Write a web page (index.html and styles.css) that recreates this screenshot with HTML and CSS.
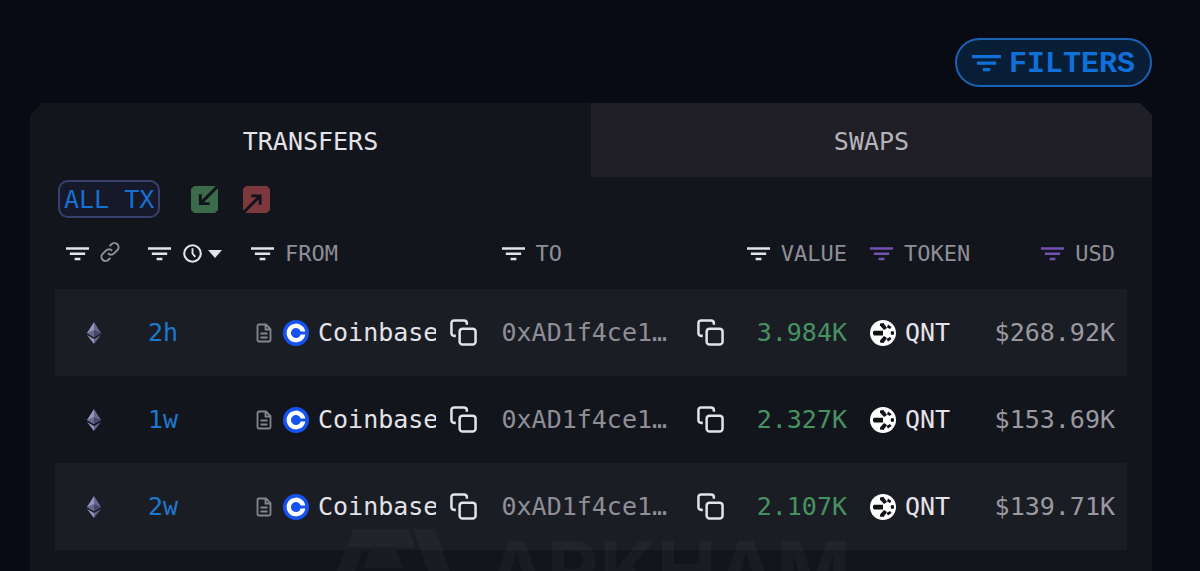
FILE: index.html
```html
<!DOCTYPE html>
<html lang="en">
<head>
<meta charset="utf-8">
<meta name="viewport" content="width=device-width, initial-scale=1">
<title>Transfers</title>
<link rel="stylesheet" href="styles.css">
</head>
<body>
<svg class="sprite" aria-hidden="true">
  <symbol id="filter" viewBox="0 0 24 14"><path d="M0 0h24v2.6H0zM4 5.4h16V8H4zM9 10.8h6v2.6H9z" fill="currentColor"/></symbol>
  <symbol id="eth" viewBox="0 0 14 22"><path d="M7 0 0 11l7 4z" fill="#9597bd"/><path d="m7 0 7 11-7 4z" fill="#666890"/><path d="m7 8-7 3 7 4z" fill="#66688f"/><path d="m7 8 7 3-7 4z" fill="#464666"/><path d="m0 13 7 9v-5z" fill="#9395ba"/><path d="m14 13-7 9v-5z" fill="#606287"/></symbol>
  <symbol id="doc" viewBox="0 0 16 20"><path d="M3 1.500h7l4.500 4.500V17c0 1-.5 1.500-1.500 1.500H3c-1 0-1.500-.5-1.500-1.500V3c0-1 .5-1.500 1.500-1.500zM9.500 1.500v5h5M4.500 10.500h7M4.500 14.500h7" fill="none" stroke="currentColor" stroke-width="1.800"/></symbol>
  <symbol id="coinbase" viewBox="0 0 26 26"><circle cx="13" cy="13" r="13" fill="#1652f0"/><path d="M17.700 11.600a5 5 0 1 0 0 2.800h4.600a9.400 9.400 0 1 1 0-2.800z" fill="#fff"/></symbol>
  <symbol id="copy" viewBox="0 0 28 28"><rect x="10" y="10" width="16.500" height="16.500" rx="3" fill="none" stroke="currentColor" stroke-width="2.600"/><path d="M6 17.500H4.500c-2 0-3-1-3-3v-10c0-2 1-3 3-3h10c2 0 3 1 3 3V6" fill="none" stroke="currentColor" stroke-width="2.600"/></symbol>
  <symbol id="qnt" viewBox="0 0 26 26"><circle cx="13" cy="13" r="13" fill="#fff"/><g fill="#101116"><path d="M4 10.800h9v4.600H4L3 14v-2z"/><path d="m10 3.500 3.500-.5 3.500 5-3 2-4-4.500z"/><path d="m14 16 3 2-3.500 5-3.500-.5v-2z"/><path d="m18 4.500 3.500 2.500-1.500 2-3-1.500z"/><path d="m21.500 11 2.500.5v3l-2.500.5-1-2z"/><path d="m20 17 1.500 2-3.500 2.500-1.500-2.500z"/></g></symbol>
</svg>

<header class="topbar">
  <button class="filters" type="button"><svg class="filters-icon" aria-hidden="true"><use href="#filter"/></svg>FILTERS</button>
</header>

<main class="card">
  <div class="tabs" role="tablist">
    <button class="tab active" type="button" role="tab" aria-selected="true">TRANSFERS</button>
    <button class="tab" type="button" role="tab" aria-selected="false">SWAPS</button>
  </div>

  <div class="toolbar">
    <button class="all-tx" type="button">ALL TX</button>
    <button class="direction" type="button" aria-label="Incoming">
      <svg viewBox="0 0 26 26"><path d="M3 0h20l3 3v20l-3 3H3l-3-3V3z" fill="#3b6b4b"/><path d="M25 1 10 16M9 8v9h9" fill="none" stroke="#11131b" stroke-width="2.800"/></svg>
    </button>
    <button class="direction" type="button" aria-label="Outgoing">
      <svg viewBox="0 0 26 26"><path d="M3 0h20l3 3v20l-3 3H3l-3-3V3z" fill="#7d383e"/><path d="m1 25 15-15M8 9.500h8.500V18" fill="none" stroke="#11131b" stroke-width="2.800"/></svg>
    </button>
  </div>

  <table class="transfers">
    <colgroup><col class="col-chain"><col class="col-time"><col><col><col class="col-amount"><col class="col-amount"><col class="col-usd"></colgroup>
    <thead>
      <tr>
        <th scope="col" aria-label="Chain"><div class="head"><svg class="filter"><use href="#filter"/></svg>
          <svg class="link" viewBox="0 0 24 24"><path d="M9.500 13.500a5 5 0 0 0 7.300.2l4-4a4.900 4.900 0 0 0-7-7L11.500 5M14.500 10.500a5 5 0 0 0-7.300-.2l-4 4a4.900 4.900 0 0 0 7 7l2.300-2.300" fill="none" stroke="currentColor" stroke-width="2.400"/></svg></div></th>
        <th scope="col" aria-label="Time"><div class="head time-head"><svg class="filter"><use href="#filter"/></svg>
          <span class="sort"><svg class="clock" viewBox="0 0 20 20"><circle cx="10" cy="10" r="8.700" fill="none" stroke="currentColor" stroke-width="2.200"/><path d="M10 4.500V10l3 3.500" fill="none" stroke="currentColor" stroke-width="2"/></svg>
          <svg class="caret" viewBox="0 0 14 8"><path d="M0 0h14L7 8z" fill="currentColor"/></svg></span></div></th>
        <th scope="col"><div class="head"><svg class="filter"><use href="#filter"/></svg>FROM</div></th>
        <th scope="col"><div class="head"><svg class="filter"><use href="#filter"/></svg>TO</div></th>
        <th scope="col"><div class="head end"><svg class="filter"><use href="#filter"/></svg>VALUE</div></th>
        <th scope="col"><div class="head"><svg class="filter on"><use href="#filter"/></svg>TOKEN</div></th>
        <th scope="col"><div class="head end"><svg class="filter on"><use href="#filter"/></svg>USD</div></th>
      </tr>
    </thead>
    <tbody>
      <tr>
        <td><svg class="eth"><use href="#eth"/></svg></td>
        <td><a class="time" href="#">2h</a></td>
        <td><div class="entity"><svg class="doc"><use href="#doc"/></svg><svg class="coin"><use href="#coinbase"/></svg><span class="name">Coinbase</span><button class="copy" type="button" aria-label="Copy sender"><svg><use href="#copy"/></svg></button></div></td>
        <td><div class="entity to"><span class="address">0xAD1f4ce1…</span><button class="copy" type="button" aria-label="Copy recipient"><svg><use href="#copy"/></svg></button></div></td>
        <td class="value">3.984K</td>
        <td><div class="token"><svg class="coin"><use href="#qnt"/></svg>QNT</div></td>
        <td class="usd">$268.92K</td>
      </tr>
      <tr>
        <td><svg class="eth"><use href="#eth"/></svg></td>
        <td><a class="time" href="#">1w</a></td>
        <td><div class="entity"><svg class="doc"><use href="#doc"/></svg><svg class="coin"><use href="#coinbase"/></svg><span class="name">Coinbase</span><button class="copy" type="button" aria-label="Copy sender"><svg><use href="#copy"/></svg></button></div></td>
        <td><div class="entity to"><span class="address">0xAD1f4ce1…</span><button class="copy" type="button" aria-label="Copy recipient"><svg><use href="#copy"/></svg></button></div></td>
        <td class="value">2.327K</td>
        <td><div class="token"><svg class="coin"><use href="#qnt"/></svg>QNT</div></td>
        <td class="usd">$153.69K</td>
      </tr>
      <tr>
        <td><svg class="eth"><use href="#eth"/></svg></td>
        <td><a class="time" href="#">2w</a></td>
        <td><div class="entity"><svg class="doc"><use href="#doc"/></svg><svg class="coin"><use href="#coinbase"/></svg><span class="name">Coinbase</span><button class="copy" type="button" aria-label="Copy sender"><svg><use href="#copy"/></svg></button></div></td>
        <td><div class="entity to"><span class="address">0xAD1f4ce1…</span><button class="copy" type="button" aria-label="Copy recipient"><svg><use href="#copy"/></svg></button></div></td>
        <td class="value">2.107K</td>
        <td><div class="token"><svg class="coin"><use href="#qnt"/></svg>QNT</div></td>
        <td class="usd">$139.71K</td>
      </tr>
    </tbody>
  </table>

  <div class="watermark" aria-hidden="true">
    <svg viewBox="0 0 128 70"><path d="M20 2h56l6 18H14zM80 2h22l24 68h-22zM12 23h17L14 70H-6zM37 23h26l7 18H31z" fill="currentColor"/></svg>
    <span>ARKHAM</span>
  </div>
</main>
</body>
</html>
```
FILE: styles.css
```css
* { box-sizing: border-box; }

body {
  display: flex;
  flex-direction: column;
  height: 100vh;
  margin: 0;
  padding: 38px 48px 0 30px;
  overflow: hidden;
  background: #080b13;
  color: #e3e3e8;
  font-family: "DejaVu Sans Mono", monospace;
  font-size: 25px;
  line-height: 32px;
}

button {
  padding: 0;
  border: 0;
  background: none;
  color: inherit;
  font: inherit;
  cursor: pointer;
}

svg { display: block; flex: none; }
.sprite { position: absolute; width: 0; height: 0; }

.topbar {
  display: flex;
  justify-content: flex-end;
  margin-bottom: 16px;
}

.filters {
  display: flex;
  align-items: center;
  gap: 8px;
  height: 49px;
  padding: 2px 15px 0;
  border: 2px solid #1b62b5;
  border-radius: 25px;
  background: #081d36;
  color: #0f70da;
  font-family: "Liberation Mono", monospace;
  font-size: 30px;
  font-weight: 700;
}
.filters-icon { width: 29px; height: 17px; }

.card {
  position: relative;
  flex: 1;
  min-height: 0;
  overflow: hidden;
  background: #13151d;
  clip-path: polygon(12px 0, calc(100% - 12px) 0, 100% 12px, 100% 100%, 0 100%, 0 12px);
}

.tabs { display: flex; height: 74px; }
.tab { flex: 1; padding-top: 4px; background: #201f27; color: #b5b4ba; }
.tab.active { background: none; color: #e3e3e8; }

.toolbar {
  display: flex;
  align-items: center;
  padding: 3px 28px 0;
}
.all-tx {
  height: 38px;
  margin-right: 6px;
  padding: 2px 4px 0;
  border: 2px solid #38406f;
  border-radius: 10px;
  background: #15192a;
  color: #1670d0;
}
.direction { margin-left: 25px; }
.direction svg { width: 27px; height: 27px; }

.transfers {
  width: calc(100% - 50px);
  margin: 0 25px;
  border-collapse: collapse;
  table-layout: fixed;
}
.col-chain { width: 82px; }
.col-time { width: 103px; }
.col-amount { width: 118px; }
.col-usd { width: 150px; }

th, td { padding: 0 12px 0 11px; text-align: left; white-space: nowrap; }
th { height: 71px; color: #8f8e97; font-size: 22px; font-weight: 400; }
td { height: 87px; }
tbody tr:nth-child(odd) { background: #1b1d25; }

.head { display: flex; align-items: center; gap: 11px; }
.head.end { justify-content: flex-end; }
.filter { width: 23px; height: 14px; color: #e3e3e8; }
.filter.on { color: #7450b4; }
.link { width: 20px; height: 20px; margin-bottom: 4px; }
.time-head { gap: 12px; }
.sort { display: flex; align-items: center; gap: 6px; color: #e3e3e8; }
.clock { width: 19px; height: 19px; }
.caret { width: 14px; height: 8px; }

.eth { width: 14px; height: 22px; margin-left: 21px; }
.time { color: #1c79cd; text-decoration: none; }
.entity { display: flex; align-items: center; padding-left: 5px; }
.doc { width: 16px; height: 20px; margin-right: 11px; color: #85858d; }
.coin { width: 26px; height: 26px; }
.name { width: 118px; margin: 0 14px 0 9px; overflow: hidden; }
.copy svg { width: 27px; height: 27px; }
.to { padding: 0; gap: 30px; }
.address { color: #8f8e97; }
.value { color: #469360; text-align: right; }
.token { display: flex; align-items: center; gap: 9px; }
.usd { color: #9a99a1; text-align: right; }

.watermark {
  position: absolute;
  top: 424px;
  left: 27%;
  display: flex;
  gap: 26px;
  color: rgba(255, 255, 255, 0.03);
  font: 700 80px/86px Inter, "Liberation Sans", sans-serif;
  pointer-events: none;
}
.watermark svg { width: 128px; height: 70px; }
```
